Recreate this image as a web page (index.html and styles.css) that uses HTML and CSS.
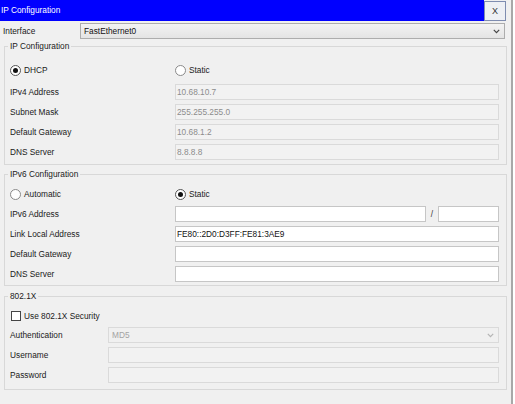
FILE: index.html
```html
<!DOCTYPE html>
<html>
<head>
<meta charset="utf-8">
<title>IP Configuration</title>
<link rel="stylesheet" href="styles.css">
</head>
<body>
<div class="window">
  <div class="titlebar">
    <div class="title">IP Configuration</div>
    <div class="close">X</div>
  </div>
  <div class="iface-row">
    <span class="iface-label">Interface</span>
    <div class="select iface-select">
      <span>FastEthernet0</span>
      <svg class="chev" width="7" height="5" viewBox="0 0 7 5"><path d="M0.8 0.8 L3.5 3.6 L6.2 0.8" fill="none" stroke="#444" stroke-width="1.2"/></svg>
    </div>
  </div>

  <fieldset class="group g-ipv4">
    <legend>IP Configuration</legend>
    <div class="row radio-row">
      <div class="opt"><span class="radio checked"></span><span>DHCP</span></div>
      <div class="opt"><span class="radio"></span><span>Static</span></div>
    </div>
    <div class="rows first-rows">
      <div class="row"><span class="lbl">IPv4 Address</span><div class="field disabled">10.68.10.7</div></div>
      <div class="row"><span class="lbl">Subnet Mask</span><div class="field disabled">255.255.255.0</div></div>
      <div class="row"><span class="lbl">Default Gateway</span><div class="field disabled">10.68.1.2</div></div>
      <div class="row"><span class="lbl">DNS Server</span><div class="field disabled">8.8.8.8</div></div>
    </div>
  </fieldset>

  <fieldset class="group g-ipv6">
    <legend>IPv6 Configuration</legend>
    <div class="row radio-row">
      <div class="opt"><span class="radio"></span><span>Automatic</span></div>
      <div class="opt"><span class="radio checked"></span><span>Static</span></div>
    </div>
    <div class="rows">
      <div class="row"><span class="lbl">IPv6 Address</span>
        <div class="ip6">
          <div class="field main"></div>
          <span class="slash">/</span>
          <div class="field prefix"></div>
        </div>
      </div>
      <div class="row"><span class="lbl">Link Local Address</span><div class="field">FE80::2D0:D3FF:FE81:3AE9</div></div>
      <div class="row"><span class="lbl">Default Gateway</span><div class="field"></div></div>
      <div class="row"><span class="lbl">DNS Server</span><div class="field"></div></div>
    </div>
  </fieldset>

  <fieldset class="group g-8021x">
    <legend>802.1X</legend>
    <div class="check-row"><span class="checkbox"></span><span>Use 802.1X Security</span></div>
    <div class="rows">
      <div class="row"><span class="lbl">Authentication</span>
        <div class="select disabled-select">
          <span>MD5</span>
          <svg class="chev" width="7" height="5" viewBox="0 0 7 5"><path d="M0.8 0.8 L3.5 3.6 L6.2 0.8" fill="none" stroke="#b4b4b4" stroke-width="1.2"/></svg>
        </div>
      </div>
      <div class="row"><span class="lbl">Username</span><div class="field disabled"></div></div>
      <div class="row"><span class="lbl">Password</span><div class="field disabled"></div></div>
    </div>
  </fieldset>
</div>
</body>
</html>
```
FILE: styles.css
```css
* { box-sizing: border-box; }
html, body { margin: 0; padding: 0; }
body {
  background: #ffffff;
  font-family: "Liberation Sans", Arial, sans-serif;
  font-size: 8.3px;
  color: #1a1a1a;
  width: 515px;
  height: 404px;
  overflow: hidden;
}
.window {
  width: 513px;
  height: 404px;
  background: #f0f0f0;
  border-right: 2px solid #a8a8a8;
}
.titlebar {
  display: flex;
  height: 21px;
}
.title {
  flex: 0 0 484px;
  height: 21px;
  background: #0000ff;
  color: #ffffff;
  line-height: 21px;
  padding-left: 1px;
}
.close {
  width: 22px;
  height: 20px;
  margin-top: 1px;
  border: 1px solid #7f8db0;
  background: #eef0f4;
  color: #333;
  font-size: 9px;
  line-height: 18px;
  text-align: center;
}
.iface-row {
  display: flex;
  align-items: center;
  height: 16px;
  margin-top: 2px;
}
.iface-label {
  width: 80px;
  padding-left: 3px;
}
.select {
  position: relative;
  display: flex;
  align-items: center;
  height: 16px;
  padding-left: 3px;
}
.iface-select {
  width: 425px;
  border: 1px solid #adadad;
  background: linear-gradient(#f3f3f3, #e4e4e4);
  color: #111;
}
.chev {
  position: absolute;
  right: 4px;
  top: 5px;
}
.group {
  margin: 1px 0 0 4px;
  width: 503px;
  padding: 0;
  border: 1px solid #d8d8d8;
  min-width: 0;
}
.group legend {
  margin-left: 3px;
  padding: 0 2px;
  line-height: 12px;
  color: #1a1a1a;
}
.row {
  display: grid;
  grid-template-columns: 165px 1fr;
  align-items: center;
  height: 20px;
  padding: 0 7px 0 5px;
}
.g-8021x .row { grid-template-columns: 98px 1fr; }
.g-ipv4 { padding: 8px 0 2px 0; }
.g-ipv4 .first-rows { margin-top: 2px; }
.g-ipv6 { margin-top: 3px; padding: 4px 0 1px 0; }
.g-8021x { margin-top: 4px; padding: 5px 0 4px 0; }
.opt {
  display: flex;
  align-items: center;
  gap: 3px;
}
.radio {
  width: 11px;
  height: 11px;
  margin-left: 0;
  border-radius: 50%;
  border: 1px solid #8a8a8a;
  background: #ffffff;
  display: flex;
  align-items: center;
  justify-content: center;
}
.radio.checked { border-color: #555; }
.radio.checked::after {
  content: "";
  width: 5px;
  height: 5px;
  border-radius: 50%;
  background: #111;
}
.field {
  height: 16px;
  border: 1px solid #c6c6c6;
  background: #ffffff;
  padding-left: 1px;
  line-height: 14px;
  color: #111;
  white-space: nowrap;
  overflow: hidden;
}
.field.disabled {
  border-color: #dadada;
  background: #f2f2f2;
  color: #8c8c8c;
}
.ip6 {
  display: flex;
  align-items: center;
}
.ip6 .main { flex: 1; }
.slash {
  width: 12px;
  text-align: center;
  color: #333;
}
.ip6 .prefix { width: 61px; }
.check-row {
  display: flex;
  align-items: center;
  gap: 3px;
  height: 18px;
  padding-left: 6px;
}
.checkbox {
  width: 10px;
  height: 10px;
  border: 1px solid #444;
  background: #ffffff;
}
.disabled-select {
  border: 1px solid #dadada;
  background: #f0f0f0;
  color: #a3a3a3;
}
```
